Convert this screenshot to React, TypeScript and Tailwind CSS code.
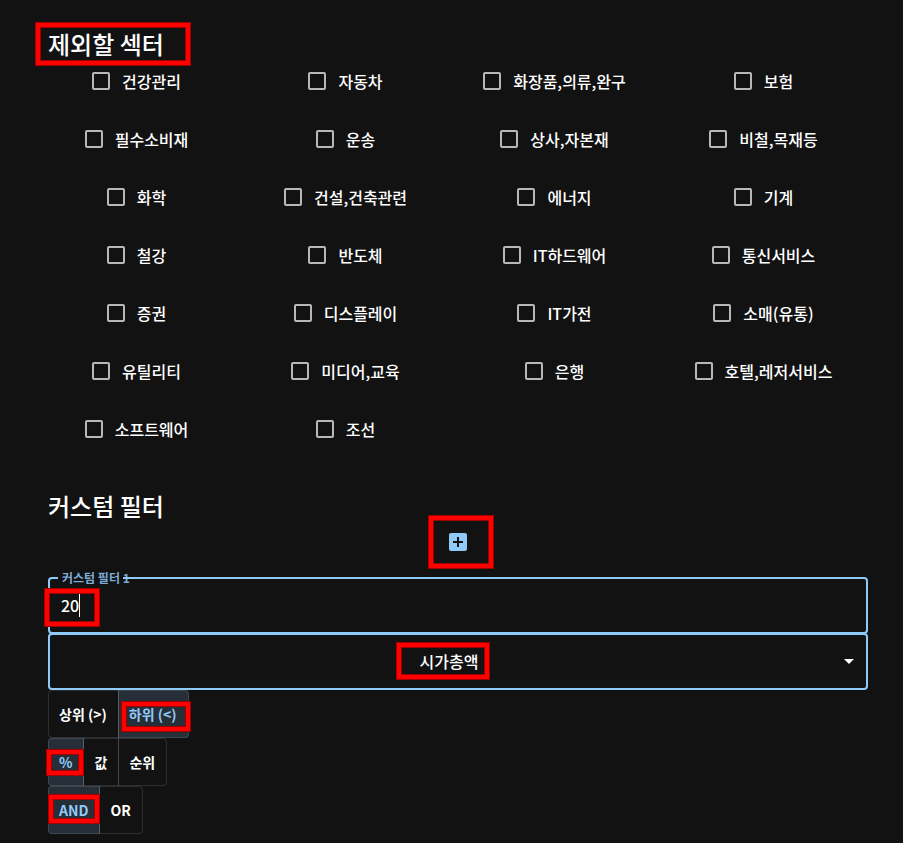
import React, { useState } from 'react';
import clsx from 'clsx';
import { MdAddBox, MdArrowDropDown } from 'react-icons/md';

const SECTORS = [
    '건강관리', '자동차', '화장품,의류,완구', '보험',
    '필수소비재', '운송', '상사,자본재', '비철,목재등',
    '화학', '건설,건축관련', '에너지', '기계',
    '철강', '반도체', 'IT하드웨어', '통신서비스',
    '증권', '디스플레이', 'IT가전', '소매(유통)',
    '유틸리티', '미디어,교육', '은행', '호텔,레저서비스',
    '소프트웨어', '조선',
];

const FACTORS = ['시가총액', 'PER', 'PBR', 'ROE'];

// Red frame that calls out a control
const Marker: React.FC<{ className: string }> = ({ className }) => (
    <span
        aria-hidden="true"
        className={clsx(
            'absolute z-10 pointer-events-none border-4 border-[#ff0000] shadow-[0_0_0_1px_#a00000,inset_0_0_0_1px_#a00000]',
            className
        )}
    />
);

interface ToggleOption {
    value: string;
    marker?: string;
}

interface ToggleGroupProps {
    label: string;
    options: ToggleOption[];
    selected: string;
    onSelect: (value: string) => void;
}

const ToggleGroup: React.FC<ToggleGroupProps> = ({ label, options, selected, onSelect }) => (
    <div role="group" aria-label={label} className="flex">
        {options.map(({ value, marker }) => (
            <button
                key={value}
                type="button"
                aria-pressed={selected === value}
                onClick={() => onSelect(value)}
                className={clsx(
                    'relative h-12 pl-2.5 pr-[11px] border border-white/12 text-sm font-bold first:rounded-l last:rounded-r not-first:-ml-px',
                    selected === value ? 'bg-[#90caf9]/16 text-[#90caf9]' : 'text-white'
                )}
            >
                {value}
                {marker && <Marker className={marker} />}
            </button>
        ))}
    </div>
);

const App: React.FC = () => {
    const [excluded, setExcluded] = useState<string[]>([]);
    const [amount, setAmount] = useState('20');
    const [factor, setFactor] = useState('시가총액');
    const [direction, setDirection] = useState('하위 (<)');
    const [unit, setUnit] = useState('%');
    const [operator, setOperator] = useState('AND');

    const toggleSector = (sector: string) => {
        setExcluded(prev =>
            prev.includes(sector) ? prev.filter(s => s !== sector) : [...prev, sector]
        );
    };

    return (
        <main className="flex min-h-screen flex-col gap-10 bg-[#121212] pt-7 pb-2 pl-12 pr-[35px] font-['Noto_Sans_CJK_KR',sans-serif] text-white">
            <section>
                <h2 className="relative w-fit text-2xl leading-8 font-medium">
                    제외할 섹터
                    <Marker className="-top-[5px] -bottom-[5px] -left-3 -right-[26px]" />
                </h2>
                <div className="-mx-2 grid grid-cols-4 justify-items-center gap-y-4">
                    {SECTORS.map(sector => (
                        <label
                            key={sector}
                            className="flex h-[42px] items-center gap-3 pr-4 whitespace-nowrap text-base font-medium"
                        >
                            <input
                                type="checkbox"
                                checked={excluded.includes(sector)}
                                onChange={() => toggleSector(sector)}
                                className="size-[18px] appearance-none rounded-xs border-2 border-white/70 checked:border-[#90caf9] checked:bg-[#90caf9]"
                            />
                            {sector}
                        </label>
                    ))}
                </div>
            </section>

            <section className="flex flex-col">
                <h2 className="text-2xl leading-8 font-medium">커스텀 필터</h2>
                <div className="flex justify-center pb-[15px]">
                    <button type="button" aria-label="필터 추가" className="relative p-2 text-[#90caf9]">
                        <MdAddBox className="size-6" />
                        <Marker className="-top-[6px] -bottom-[6px] -left-[9px] -right-[15px]" />
                    </button>
                </div>

                <div className="relative">
                    <label htmlFor="filter-1" className="absolute left-[14px] -top-[7px] text-xs leading-4 font-bold text-[#90caf9]/85">
                        커스텀 필터 1
                    </label>
                    {/* outline with a notch for the floating label */}
                    <fieldset aria-hidden="true" className="pointer-events-none absolute inset-x-0 -top-px bottom-0 rounded border-2 border-[#90caf9] px-2">
                        <legend className="h-1 w-[65px]" />
                    </fieldset>
                    <input
                        id="filter-1"
                        type="text"
                        value={amount}
                        onChange={e => setAmount(e.target.value)}
                        className="block h-[57px] w-full bg-transparent px-[13px] pb-0.5 text-base font-medium caret-transparent outline-none"
                    />
                    <span aria-hidden="true" className="absolute left-[31px] top-[17px] h-[23px] w-px bg-white" />
                    <Marker className="-left-[3px] top-3 h-[37px] w-[54px]" />
                </div>

                <div className="relative -mt-px">
                    <select
                        aria-label="팩터"
                        value={factor}
                        onChange={e => setFactor(e.target.value)}
                        className="block h-[57px] w-full appearance-none rounded border-2 border-[#90caf9] bg-transparent pr-[30px] pb-0.5 pl-3 text-center text-base font-medium outline-none [text-align-last:center]"
                    >
                        {FACTORS.map(name => (
                            <option key={name} value={name} className="bg-[#121212]">{name}</option>
                        ))}
                    </select>
                    <MdArrowDropDown className="pointer-events-none absolute right-[7px] top-4 size-6" />
                    <Marker className="inset-x-0 top-[10px] mx-auto h-9 w-[92px] -translate-x-[15px]" />
                </div>

                <ToggleGroup
                    label="방향"
                    options={[
                        { value: '상위 (>)' },
                        { value: '하위 (<)', marker: 'left-[3px] -right-[2px] top-[11px] h-[29px]' },
                    ]}
                    selected={direction}
                    onSelect={setDirection}
                />
                <ToggleGroup
                    label="단위"
                    options={[
                        { value: '%', marker: '-left-[2px] right-0 top-[11px] h-[25px]' },
                        { value: '값' },
                        { value: '순위' },
                    ]}
                    selected={unit}
                    onSelect={setUnit}
                />
                <ToggleGroup
                    label="조건"
                    options={[
                        { value: 'AND', marker: 'left-0 right-0 top-2 h-7' },
                        { value: 'OR' },
                    ]}
                    selected={operator}
                    onSelect={setOperator}
                />
            </section>
        </main>
    );
};

export default App;
